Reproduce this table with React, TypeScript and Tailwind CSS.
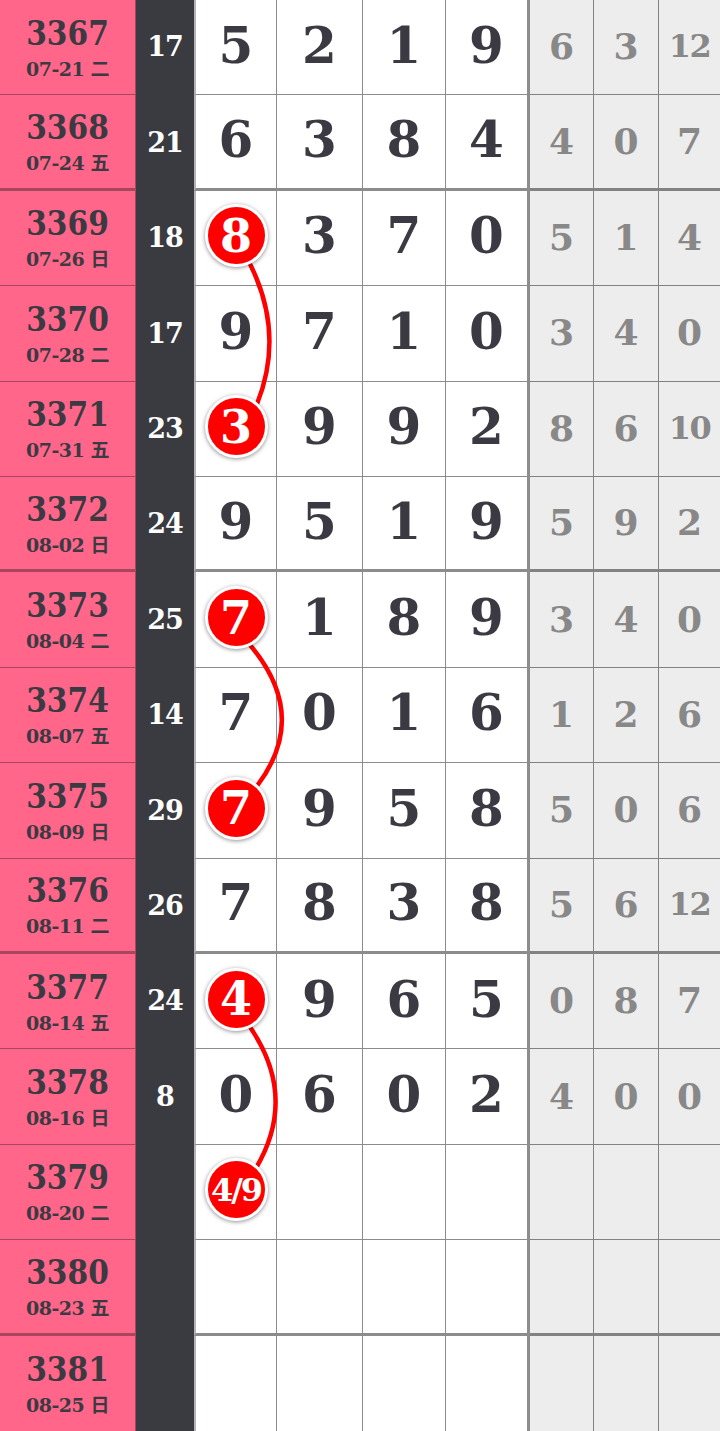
import React from "react";

type Row = {
  id: string;
  date: string;
  sum: string;
  main: string[];
  side: string[];
  ball?: string;
};

const rows: Row[] = [
  { id: "3367", date: "07-21 二", sum: "17", main: ["5", "2", "1", "9"], side: ["6", "3", "12"] },
  { id: "3368", date: "07-24 五", sum: "21", main: ["6", "3", "8", "4"], side: ["4", "0", "7"] },
  { id: "3369", date: "07-26 日", sum: "18", main: ["8", "3", "7", "0"], side: ["5", "1", "4"], ball: "8" },
  { id: "3370", date: "07-28 二", sum: "17", main: ["9", "7", "1", "0"], side: ["3", "4", "0"] },
  { id: "3371", date: "07-31 五", sum: "23", main: ["3", "9", "9", "2"], side: ["8", "6", "10"], ball: "3" },
  { id: "3372", date: "08-02 日", sum: "24", main: ["9", "5", "1", "9"], side: ["5", "9", "2"] },
  { id: "3373", date: "08-04 二", sum: "25", main: ["7", "1", "8", "9"], side: ["3", "4", "0"], ball: "7" },
  { id: "3374", date: "08-07 五", sum: "14", main: ["7", "0", "1", "6"], side: ["1", "2", "6"] },
  { id: "3375", date: "08-09 日", sum: "29", main: ["7", "9", "5", "8"], side: ["5", "0", "6"], ball: "7" },
  { id: "3376", date: "08-11 二", sum: "26", main: ["7", "8", "3", "8"], side: ["5", "6", "12"] },
  { id: "3377", date: "08-14 五", sum: "24", main: ["4", "9", "6", "5"], side: ["0", "8", "7"], ball: "4" },
  { id: "3378", date: "08-16 日", sum: "8", main: ["0", "6", "0", "2"], side: ["4", "0", "0"] },
  { id: "3379", date: "08-20 二", sum: "", main: ["", "", "", ""], side: ["", "", ""], ball: "4/9" },
  { id: "3380", date: "08-23 五", sum: "", main: ["", "", "", ""], side: ["", "", ""] },
  { id: "3381", date: "08-25 日", sum: "", main: ["", "", "", ""], side: ["", "", ""] },
];

const thick = new Set([1, 5, 9, 13]);

export default function App() {
  return (
    <div
      className="relative w-[720px] h-[1431px] overflow-hidden bg-white"
      style={{ fontFamily: '"DejaVu Serif", "Noto Sans CJK SC", serif' }}
    >
      <div className="grid h-[1431px] w-[720px] grid-cols-[136px_58px_83px_86px_83px_84px_64px_65px_61px] grid-rows-[repeat(15,minmax(0,1fr))]">
        {rows.map((r, i) => {
          const bb = thick.has(i)
            ? "border-b-[3px]"
            : i === 14
            ? "border-b-0"
            : "border-b";
          return (
            <React.Fragment key={r.id}>
              <div
                className={`flex flex-col items-center justify-center bg-[#ff6689] border-r border-[rgba(60,30,40,0.45)] ${bb} text-[#3b3a42] font-bold pt-[2px]`}
              >
                <div
                  className="text-[33px] leading-[36px]"
                  style={{ fontFamily: '"DejaVu Serif Condensed", "DejaVu Serif", serif', fontStretch: "condensed" }}
                >
                  {r.id}
                </div>
                <div className="text-[19px] leading-[24px] mt-[5px] tracking-[-0.5px]">
                  {r.date}
                </div>
              </div>
              <div className="flex items-center justify-center bg-[#3a3a41] text-white font-bold text-[27px] tracking-[-1px]">
                {r.sum}
              </div>
              {r.main.map((m, j) => (
                <div
                  key={"m" + j}
                  className={`flex items-center justify-center bg-white ${bb} border-[rgba(0,0,0,0.45)] ${
                    j === 3 ? "border-r-[3px]" : "border-r"
                  } ${j === 0 ? "border-l-2 border-l-[#b4b4b4]" : ""} text-[#3b3a42] font-bold text-[50px] pb-[4px]`}
                >
                  {j === 0 && r.ball ? (
                    <div className="relative z-10 flex h-[63px] w-[63px] shrink-0 items-center justify-center rounded-full border-[3px] border-white bg-[#f00] text-white shadow-[0_1px_4px_rgba(0,0,0,0.45)]">
                      <span
                        className={
                          r.ball.length > 1
                            ? "text-[32px] leading-none tracking-[-2px]"
                            : "text-[46px] leading-none"
                        }
                      >
                        {r.ball}
                      </span>
                    </div>
                  ) : (
                    m
                  )}
                </div>
              ))}
              {r.side.map((s, j) => (
                <div
                  key={"s" + j}
                  className={`flex items-center justify-center bg-[#ededed] ${bb} border-[rgba(0,0,0,0.45)] ${
                    j < 2 ? "border-r" : ""
                  } text-[#888888] font-bold ${s.length > 1 ? "text-[32px] tracking-[-1.5px]" : "text-[36px]"} pb-[2px]`}
                >
                  {s}
                </div>
              ))}
            </React.Fragment>
          );
        })}
      </div>
      <svg
        className="pointer-events-none absolute left-0 top-0"
        width="720"
        height="1431"
        viewBox="0 0 720 1431"
      >
        <g fill="none" stroke="#f00" strokeWidth="4.5" strokeLinecap="round">
          <path d="M250 264 Q 285 334 257 404" />
          <path d="M250 645 Q 310 716 257 786" />
          <path d="M250 1027 Q 298 1097 256 1168" />
        </g>
      </svg>
    </div>
  );
}
